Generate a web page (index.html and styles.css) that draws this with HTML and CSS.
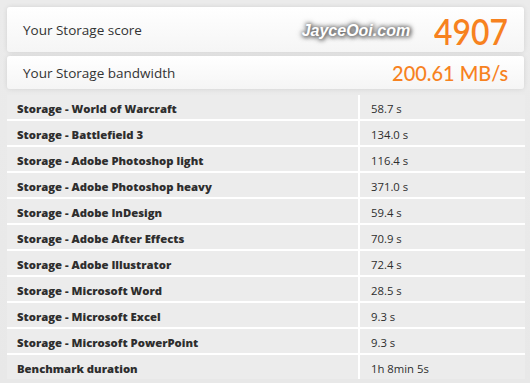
FILE: index.html
```html
<!DOCTYPE html>
<html>
<head>
<meta charset="utf-8">
<link rel="stylesheet" href="styles.css">
</head>
<body>
<div class="page">
  <div class="card card-score">
    <span class="label">Your Storage score</span>
    <span class="right">
      <span class="watermark">JayceOoi.com</span>
      <span class="score">4907</span>
    </span>
  </div>
  <div class="card card-bw">
    <span class="label">Your Storage bandwidth</span>
    <span class="bw">200.61 MB/s</span>
  </div>
  <div class="table">
    <div class="cell name">Storage - World of Warcraft</div><div class="cell val">58.7 s</div>
    <div class="cell name">Storage - Battlefield 3</div><div class="cell val">134.0 s</div>
    <div class="cell name">Storage - Adobe Photoshop light</div><div class="cell val">116.4 s</div>
    <div class="cell name">Storage - Adobe Photoshop heavy</div><div class="cell val">371.0 s</div>
    <div class="cell name">Storage - Adobe InDesign</div><div class="cell val">59.4 s</div>
    <div class="cell name">Storage - Adobe After Effects</div><div class="cell val">70.9 s</div>
    <div class="cell name">Storage - Adobe Illustrator</div><div class="cell val">72.4 s</div>
    <div class="cell name">Storage - Microsoft Word</div><div class="cell val">28.5 s</div>
    <div class="cell name">Storage - Microsoft Excel</div><div class="cell val">9.3 s</div>
    <div class="cell name">Storage - Microsoft PowerPoint</div><div class="cell val">9.3 s</div>
    <div class="cell name">Benchmark duration</div><div class="cell val">1h 8min 5s</div>
  </div>
</div>
</body>
</html>
```

FILE: styles.css
```css
html, body {
  margin: 0;
  padding: 0;
  background: #e9e9e9;
}
.page {
  width: 530px;
  height: 383px;
  box-sizing: border-box;
  padding: 7px 6px 0 7px;
  background: linear-gradient(#ebebeb, #e8e8e8);
  font-family: "Open Sans", sans-serif;
  color: #333;
  overflow: hidden;
}
.card {
  background: linear-gradient(#ffffff, #f5f5f5);
  border-radius: 3px;
  box-shadow: 0 0 5px rgba(0,0,0,0.1);
  display: flex;
  align-items: center;
  justify-content: space-between;
  box-sizing: border-box;
  padding: 0 16px 0 16px;
}
.card-score {
  height: 45px;
}
.card-bw {
  height: 33px;
  margin-top: 4px;
}
.label {
  font-size: 13.5px;
  color: #333;
}
.right {
  display: flex;
  align-items: center;
}
.watermark {
  font-family: "Liberation Sans", Arial, sans-serif;
  font-weight: bold;
  font-style: italic;
  font-size: 16px;
  color: #fff;
  text-shadow: 0 0 4px #666, 0 0 7px #888, 1px 1px 4px #444;
  margin-right: 12px;
  margin-top: 3px;
}
.score {
  font-family: Lato, sans-serif;
  font-weight: 600;
  font-size: 37px;
  color: #f7821f;
  line-height: 1;
  margin-top: 1px;
  display: inline-block;
  transform: scaleX(0.86);
  transform-origin: right center;
}
.bw {
  font-family: Lato, sans-serif;
  font-weight: 500;
  font-size: 21px;
  color: #f7821f;
  line-height: 1;
  display: inline-block;
  transform: scaleX(0.95);
  transform-origin: right center;
}
.table {
  margin-top: 6px;
  display: grid;
  grid-template-columns: 351px 1fr;
  column-gap: 2px;
  row-gap: 2px;
  width: 518px;
  background: #ffffff;
}
.cell {
  background: #ececec;
  height: 22px;
  padding-top: 2px;
  line-height: 24px;
  font-size: 11.3px;
  color: #2e2e2e;
  white-space: nowrap;
}
.name {
  font-weight: 800;
  padding-left: 10px;
}
.val {
  padding-left: 11px;
}
```
